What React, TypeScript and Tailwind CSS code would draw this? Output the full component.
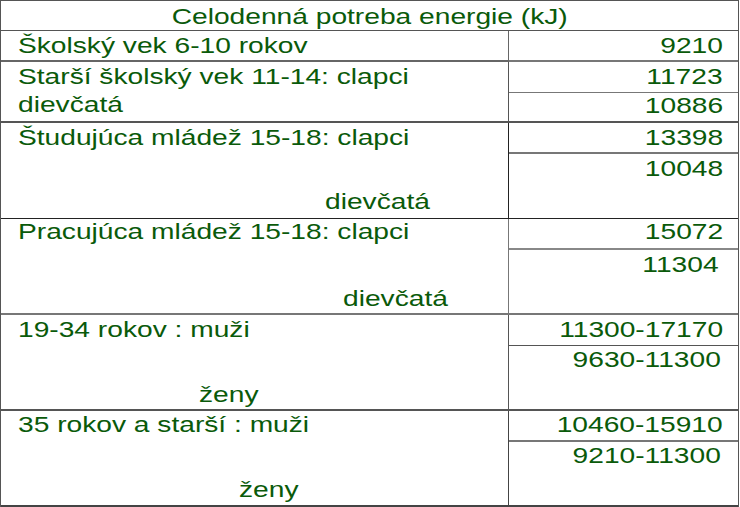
import React from "react";

const txt = "text-[#0a5a0a]";

function L({ children }: { children: React.ReactNode }) {
  return <span className="inline-block origin-left scale-x-[1.28] whitespace-nowrap">{children}</span>;
}
function R({ children }: { children: React.ReactNode }) {
  return <span className="inline-block origin-right scale-x-[1.28] whitespace-nowrap">{children}</span>;
}

export default function App() {
  return (
    <div
      className="w-[740px] h-[507px] bg-white overflow-hidden"
      style={{ fontFamily: '"Liberation Sans", Arial, sans-serif' }}
    >
      <div
        className={`grid w-[739px] grid-cols-[508px_229px] grid-rows-[30px_31px_31px_30px_31px_65px_31px_65px_31px_65px_31px_65px] border-l border-t border-r border-[#555] text-[22px] leading-[24px] ${txt}`}
      >
        {/* title */}
        <div className="col-span-2 border-b border-[#555] pt-[4px] text-center">
          <span className="inline-block origin-center scale-x-[1.28] whitespace-nowrap">
            Celodenná potreba energie (kJ)
          </span>
        </div>

        {/* row 1 */}
        <div className="border-b-2 border-r border-[#666] pl-[17px] pt-[3px]">
          <L>Školský vek 6-10 rokov</L>
        </div>
        <div className="border-b-2 border-[#777] pr-[15px] pt-[3px] text-right">
          <R>9210</R>
        </div>

        {/* row 2 */}
        <div className="row-span-2 border-b-2 border-r border-[#555] pl-[17px] pt-[1px] leading-[28px]">
          <div><L>Starší školský vek 11-14: clapci</L></div>
          <div><L>dievčatá</L></div>
        </div>
        <div className="border-b border-[#777] pr-[15px] pt-[3px] text-right">
          <R>11723</R>
        </div>
        <div className="border-b-2 border-[#555] pr-[15px] pt-[1px] text-right">
          <R>10886</R>
        </div>

        {/* row 3 */}
        <div className="row-span-2 flex flex-col border-b border-r border-[#222] pl-[17px] pt-[3px]">
          <div><L>Študujúca mládež 15-18: clapci</L></div>
          <div className="mt-[40px] pl-[307px]"><L>dievčatá</L></div>
        </div>
        <div className="border-b-2 border-[#777] pr-[15px] pt-[3px] text-right">
          <R>13398</R>
        </div>
        <div className="border-b border-[#222] pr-[15px] pt-[3px] text-right">
          <R>10048</R>
        </div>

        {/* row 4 */}
        <div className="row-span-2 flex flex-col border-b-2 border-r border-[#777] pl-[17px] pt-[1px]">
          <div><L>Pracujúca mládež 15-18: clapci</L></div>
          <div className="mt-[43px] pl-[325px]"><L>dievčatá</L></div>
        </div>
        <div className="border-b-2 border-[#888] pr-[15px] pt-[1px] text-right">
          <R>15072</R>
        </div>
        <div className="border-b-2 border-[#777] pr-[19px] pt-[3px] text-right">
          <R>11304</R>
        </div>

        {/* row 5 */}
        <div className="row-span-2 flex flex-col border-b-2 border-r border-[#555] pl-[17px] pt-[3px]">
          <div><L>19-34 rokov : muži</L></div>
          <div className="mt-[41px] pl-[181px]"><L>ženy</L></div>
        </div>
        <div className="border-b border-[#555] pr-[15px] pt-[3px] text-right">
          <R>11300-17170</R>
        </div>
        <div className="border-b-2 border-[#555] pr-[17px] pt-[2px] text-right">
          <R>9630-11300</R>
        </div>

        {/* row 6 */}
        <div className="row-span-2 flex flex-col border-b-2 border-r border-[#444] pl-[17px] pt-[2px]">
          <div><L>35 rokov a starší : muži</L></div>
          <div className="mt-[41px] pl-[221px]"><L>ženy</L></div>
        </div>
        <div className="border-b-2 border-[#777] pr-[15px] pt-[2px] text-right">
          <R>10460-15910</R>
        </div>
        <div className="border-b-2 border-[#444] pr-[17px] pt-[2px] text-right">
          <R>9210-11300</R>
        </div>
      </div>
    </div>
  );
}
